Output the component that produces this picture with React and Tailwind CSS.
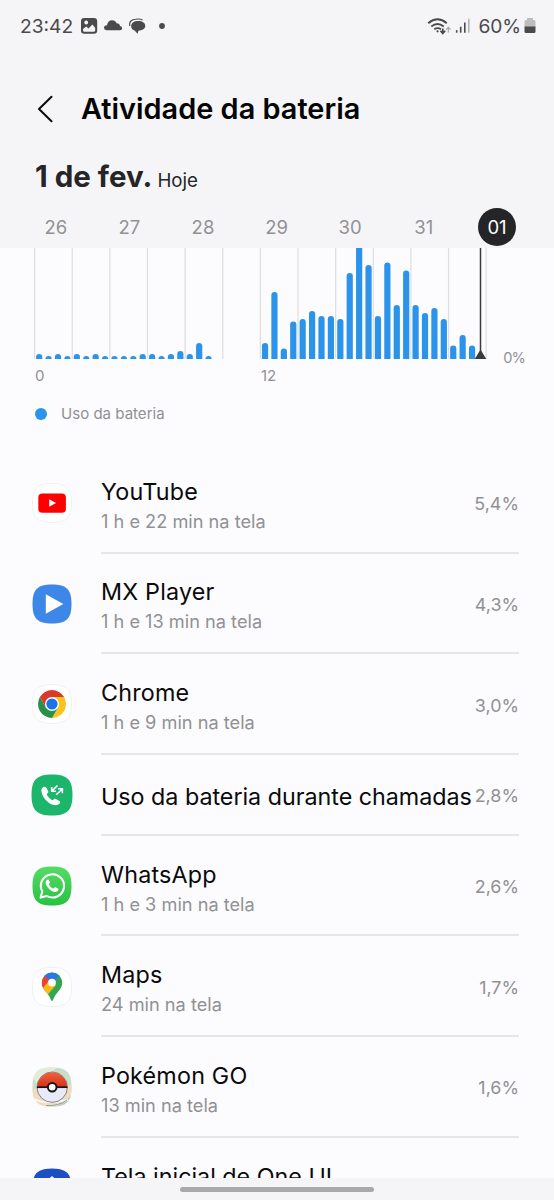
const RED = "#ff0000";
const TILE =
  "M20 0.5C34.5 0.5 39.5 5.5 39.5 20S34.5 39.5 20 39.5S0.5 34.5 0.5 20S5.5 0.5 20 0.5Z";

function Tile({ fill, stroke = "none", children }) {
  return (
    <svg viewBox="0 0 40 40" className="size-10 shrink-0">
      <path d={TILE} fill={fill} stroke={stroke} />
      {children}
    </svg>
  );
}

function YouTubeIcon() {
  return (
    <Tile fill="#fff" stroke="#f0f0f2">
      <rect x="6.3" y="10.4" width="27.6" height="19.3" rx="4" fill={RED} />
      <path d="M17.2 16.3L24 20L17.2 23.8Z" fill="#fff" />
    </Tile>
  );
}

function MxIcon() {
  return (
    <Tile fill="#3d87e9">
      <path d="M13.8 10.3L31.3 20L13.8 29.8Z" fill="#fff" />
    </Tile>
  );
}

function ChromeIcon() {
  return (
    <Tile fill="#fff" stroke="#f0f0f2">
      <path d="M20 13H32.12A14 14 0 0 1 20 34L26.06 23.5Z" fill="#fcc31e" />
      <path d="M26.06 23.5L20 34A14 14 0 0 1 7.88 13L13.94 23.5Z" fill="#289048" />
      <path d="M7.88 13A14 14 0 0 1 32.12 13H20L13.94 23.5Z" fill="#da3a2b" />
      <circle cx="20" cy="20" r="7" fill="#fff" />
      <circle cx="20" cy="20" r="5.6" fill="#1b73e8" />
    </Tile>
  );
}

function CallsIcon() {
  return (
    <svg viewBox="0 0 40 40" className="-mx-px size-[42px] shrink-0">
      <path d={TILE} fill="#1bb56c" />
      <path
        d="M11.6 12.4C10 13.3 9.5 15.3 10.2 17.9C11.6 23.3 16.4 28.4 22 29.6C24.5 30 26.6 29.4 27.6 27.7C28 26.9 27.8 26.3 27.1 25.8L23.6 23.8C22.9 23.4 22.3 23.5 21.8 24L20.6 25.2C18.2 24.1 16 21.9 14.9 19.4L16.1 18.2C16.6 17.7 16.7 17.1 16.4 16.4L14.5 12.9C14 11.9 12.7 11.8 11.6 12.4Z"
        fill="#fff"
      />
      <g fill="none" stroke="#fff" strokeWidth="1.5">
        <path d="M25.2 10.9L20 16.1M19.7 12.3V16.4H23.8" />
        <path d="M24 19.8L29.6 14.5M25.6 14H29.9V18.4" />
      </g>
    </svg>
  );
}

function WhatsAppIcon() {
  return (
    <Tile fill="url(#wa)">
      <defs>
        <linearGradient id="wa" x1="0" y1="0" x2="0" y2="1">
          <stop offset="0" stopColor="#55dc66" />
          <stop offset="1" stopColor="#27c240" />
        </linearGradient>
      </defs>
      <path
        d="M8.6 31.6L10.3 25.5A11.6 11.6 0 1 1 14.6 29.9Z"
        fill="none"
        stroke="#fff"
        strokeWidth="2.1"
        strokeLinejoin="round"
      />
      <path
        d="M15.8 13.5C14.2 14 13.4 15.7 13.8 17.4C14.9 21.3 18.2 24.7 22.3 25.9C24.2 26.3 26.2 25.2 26.5 23.2C26.5 22.8 26.4 22.6 26 22.4L23.5 21.2C23.1 21 22.8 21.1 22.6 21.4L21.6 22.6C19.5 21.8 17.8 20.2 16.9 18.2L17.8 17.1C18 16.8 18 16.6 17.9 16.3L16.8 13.9C16.6 13.5 16.3 13.4 15.8 13.5Z"
        fill="#fff"
      />
    </Tile>
  );
}

function MapsIcon() {
  return (
    <Tile fill="#fff" stroke="#f0f0f2">
      <defs>
        <clipPath id="pin">
          <path d="M20 5.6A10.2 10.2 0 0 1 30.2 15.8C30.2 19.6 28.6 21.7 25.8 25.1C23.6 27.8 22.2 29.8 21.3 32.6C20.8 34.3 19.2 34.3 18.7 32.6C17.8 29.8 16.4 27.8 14.2 25.1C11.4 21.7 9.8 19.6 9.8 15.8A10.2 10.2 0 0 1 20 5.6Z" />
        </clipPath>
      </defs>
      <g clipPath="url(#pin)">
        <rect x="8" y="4" width="24" height="32" fill="#36a552" />
        <path d="M11 8L20 15.8L29.5 7.5L24 3H12Z" fill="#2a78e4" />
        <path d="M8 21L12 8L20 15.8L11 26Z" fill="#e8443a" />
        <path d="M9 23.5L18 12.5L24 18L14 29.5Z" fill="#fbbc11" />
      </g>
      <circle cx="20" cy="15.6" r="3.9" fill="#fff" />
    </Tile>
  );
}

function PokemonIcon() {
  return (
    <Tile fill="#c9ddcb">
      <defs>
        <clipPath id="tile">
          <path d={TILE} />
        </clipPath>
        <linearGradient id="ball" x1="0" y1="0" x2="0" y2="1">
          <stop offset="0" stopColor="#ee6340" />
          <stop offset="1" stopColor="#d62f18" />
        </linearGradient>
      </defs>
      <g clipPath="url(#tile)">
        <path d="M0 22L40 18V40H0Z" fill="#f0dcbf" />
        <path d="M0 8L12 0H26L4 16Z" fill="#e3ecd9" />
        <path d="M24 40L40 28V40Z" fill="#bfd3c0" />
        <path d="M2 32Q14 38 36 33" stroke="#fff" strokeWidth="1.6" fill="none" />
        <path d="M14 38.5Q26 39.5 35 33" stroke="#7d9c97" strokeWidth="0.9" fill="none" />
      </g>
      <circle cx="20.2" cy="20.2" r="15.2" fill="#e6eafa" stroke="#5b5358" strokeWidth="0.7" />
      <path d="M5.3 20.2A14.9 14.9 0 0 1 35.1 20.2Z" fill="url(#ball)" />
      <path d="M5 20.2H35.4" stroke="#161616" strokeWidth="1.7" />
      <circle cx="20.2" cy="20.2" r="4.3" fill="#fff" stroke="#161616" strokeWidth="2" />
    </Tile>
  );
}

function HomeIcon() {
  return (
    <Tile fill="#1c4ec4">
      <path d="M20 8L31 18V31H9V18Z" fill="#fff" />
    </Tile>
  );
}

const APPS = [
  { name: "YouTube", time: "1 h e 22 min na tela", pct: "5,4%", Icon: YouTubeIcon },
  { name: "MX Player", time: "1 h e 13 min na tela", pct: "4,3%", Icon: MxIcon },
  { name: "Chrome", time: "1 h e 9 min na tela", pct: "3,0%", Icon: ChromeIcon },
  { name: "Uso da bateria durante chamadas", pct: "2,8%", Icon: CallsIcon },
  { name: "WhatsApp", time: "1 h e 3 min na tela", pct: "2,6%", Icon: WhatsAppIcon },
  { name: "Maps", time: "24 min na tela", pct: "1,7%", Icon: MapsIcon },
  { name: "Pokémon GO", time: "13 min na tela", pct: "1,6%", Icon: PokemonIcon },
];

const USAGE = [
  5, 3, 5, 3, 5, 3, 5, 3, 3, 3, 3, 5, 5, 3, 5, 8, 5, 16, 3, 0, 0, 0, 0, 0, 16, 67, 10.5, 37.5,
  40, 48, 43, 43, 40, 86, 130, 94, 43, 96.5, 54, 88.5, 54, 46, 51, 40, 13.5, 24, 13.5,
];

function bar(x, h) {
  const y = 111 - h;
  const r = Math.min(3.1, h);
  return `M${x - 3.1} 111V${y + r}A3.1 ${r} 0 0 1 ${x + 3.1} ${y + r}V111Z`;
}

function Chart() {
  return (
    <svg viewBox="0 0 554 111" className="block h-[111px] w-full shrink-0">
      {Array.from({ length: 13 }, (_, i) => (
        <rect key={i} x={34 + i * 37.63} y="0" width="1.2" height="111" fill="#dedee1" />
      ))}
      {USAGE.map((h, i) => h > 0 && <path key={i} d={bar(39.2 + i * 9.41, h)} fill="#2c93ea" />)}
      <path d="M480.5 0V108" stroke="#3a3a3c" strokeWidth="1.5" />
      <path d="M474.8 111L480.5 101.5L486.3 111Z" fill="#3a3a3c" />
    </svg>
  );
}

function StatusBar() {
  return (
    <div className="flex h-[52px] items-center pl-5 pr-[18px] text-[#4a4a4c]">
      <span className="w-[61px] pt-px text-[19.2px]">23:42</span>
      <svg viewBox="0 0 90 20" className="h-5 w-[90px]" fill="currentColor">
        <path
          fillRule="evenodd"
          d="M3.2 2H13Q16.2 2 16.2 5.2V14.5Q16.2 17.7 13 17.7H3.2Q0 17.7 0 14.5V5.2Q0 2 3.2 2ZM5.2 4.6A1.9 1.9 0 1 0 5.2 8.4A1.9 1.9 0 1 0 5.2 4.6ZM2 13V14.3Q2 15.8 3.5 15.8H12.7Q14.2 15.8 14.2 14.3V12L11.4 8.5L7.5 12.6L5.2 10.5Z"
        />
        <path d="M25.5 14.2Q23 14.2 23 11.8Q23 9.6 26 9.2Q27 4.3 31 4.3Q34.4 4.3 35.6 7.3Q38.5 7.2 39 10Q41.2 10.5 41.2 12.4Q41.2 14.2 39 14.2Z" />
        <path d="M57.2 5C61.5 5 64.3 7 64.3 10.1C64.3 12.8 61.5 14.5 57.4 14.8L56.6 17.8L53.6 14.5C51 13.9 50.2 12.2 50.2 10.1C50.2 7 52.8 5 57.2 5Z" />
        <path d="M48.9 10C47.5 5.5 51 3.4 54.5 3.3C57 2.9 60 3.1 61.5 4" fill="none" stroke="currentColor" strokeWidth="1.1" />
        <circle cx="81" cy="10" r="2.9" />
      </svg>
      <svg viewBox="0 0 46 22" className="ml-auto h-[22px] w-[46px]" fill="none" stroke="currentColor">
        <g strokeWidth="1.9">
          <path d="M1.2 8.2Q10.5 0.5 19.8 8.2" />
          <path d="M4.3 11.4Q10.5 6.5 16.7 11.4" />
          <path d="M7.3 14.3Q10.5 12 14 14.3" />
        </g>
        <circle cx="10.5" cy="16.3" r="1.1" fill="currentColor" stroke="none" />
        <path d="M15.8 13.5V18M13.4 15.7L15.8 18.4L18.2 15.7" strokeWidth="1.7" />
        <path d="M21.3 17.5V12.7M19 14.7L21.3 12.3L23.6 14.7" stroke="#a8a8aa" strokeWidth="1.2" />
        <g strokeWidth="1.6">
          <path d="M29.7 17.7V15.2" />
          <path d="M33.7 17.7V11.7" />
          <path d="M37.8 17.7V7.5" />
          <path d="M41.8 17.7V3.7" stroke="#b4b4b6" />
        </g>
      </svg>
      <span className="ml-[5px] pt-px text-[19.2px] tracking-[-0.1px]">60%</span>
      <svg viewBox="0 0 12 18" className="ml-[3px] h-[18px] w-3">
        <path d="M3 1H9V3H10Q11.5 3 11.5 4.5V10H0.5V4.5Q0.5 3 2 3H3Z" fill="#bdbdbf" />
        <path d="M0.5 9.5H11.5V14.5Q11.5 16 10 16H2Q0.5 16 0.5 14.5Z" fill="#4a4a4c" />
      </svg>
    </div>
  );
}

function AppRow({ name, time, pct, Icon }) {
  return (
    <li className={`flex shrink-0 items-center pl-8 pr-[35px] ${time ? "h-[100.6px]" : "h-[81px]"}`}>
      <Icon />
      <div className="ml-[29px] flex h-full min-w-0 flex-1 items-center justify-between border-b-2 border-[#e6e6e9]">
        <div className={`whitespace-nowrap ${time ? "pt-[7px]" : "pt-[4px]"}`}>
          <p className={`text-[23.3px] leading-[31px] text-[#0a0a0b] ${time ? "tracking-[0.2px]" : "tracking-[-0.02px]"}`}>
            {name}
          </p>
          {time && <p className="text-[18.2px] leading-[29px] text-[#919194]">{time}</p>}
        </div>
        <span className="pt-[5px] text-[17.9px] text-[#919194]">{pct}</span>
      </div>
    </li>
  );
}

export default function App() {
  return (
    <div className="flex h-[1200px] w-[554px] flex-col overflow-hidden bg-[#fcfcfe] font-['Inter',sans-serif]">
      <header className="h-[248px] shrink-0 bg-[#f5f5f7]">
        <StatusBar />
        <div className="flex h-[114px] items-center pl-[37px]">
          <svg viewBox="0 0 18 28" className="h-7 w-[18px]" fill="none" stroke="#0a0a0b" strokeWidth="2" strokeLinecap="round" strokeLinejoin="round">
            <path d="M14.5 1.8L2 14L14.5 26.2" />
          </svg>
          <h1 className="ml-[26px] text-[28.9px] font-semibold text-[#050506]">Atividade da bateria</h1>
        </div>
        <div className="-mt-3 flex h-[44px] items-baseline gap-[5px] pl-[35px] text-[#252528]">
          <span className="text-[29.5px] leading-[44px] font-bold">1 de fev.</span>
          <span className="text-[18.7px]">Hoje</span>
        </div>
        <div className="mt-2 flex h-[42px] items-center pl-[19px] text-[18.5px] text-[#919194]">
          {["26", "27", "28", "29", "30", "31"].map((d) => (
            <span key={d} className="w-[73.6px] pt-px text-center">{d}</span>
          ))}
          <span className="ml-[17.5px] flex size-[38px] items-center justify-center rounded-full bg-[#252528] pt-px text-white">01</span>
        </div>
      </header>
      <Chart />
      <div className="flex h-[34px] shrink-0 items-center text-[15px] text-[#919194]">
        <span className="w-[226px] pl-[35px]">0</span>
        <span className="pl-[35px]">12</span>
        <span className="mb-[35px] ml-auto pr-[29px] text-[14.6px] tracking-[-0.9px]">0%</span>
      </div>
      <div className="flex h-[42px] shrink-0 items-center gap-3.5 pl-[35px] text-[15.05px] text-[#919194]">
        <span className="size-3 rounded-full bg-[#2c93ea]" />
        Uso da bateria
      </div>
      <ul className="flex min-h-0 flex-1 flex-col overflow-hidden pt-[18px]">
        {APPS.map((app) => (
          <AppRow key={app.name} {...app} />
        ))}
        <li className="flex shrink-0 items-start gap-[29px] pl-8 pt-[30px]">
          <HomeIcon />
          <p className="-mt-[7px] text-[23.3px] leading-[31px] text-[#0a0a0b]">Tela inicial de One UI</p>
        </li>
      </ul>
      <footer className="flex h-[22px] shrink-0 justify-center bg-[#f5f5f7] pt-[9px]">
        <span className="h-[5px] w-[194px] rounded-full bg-[#a9a9ab]" />
      </footer>
    </div>
  );
}
